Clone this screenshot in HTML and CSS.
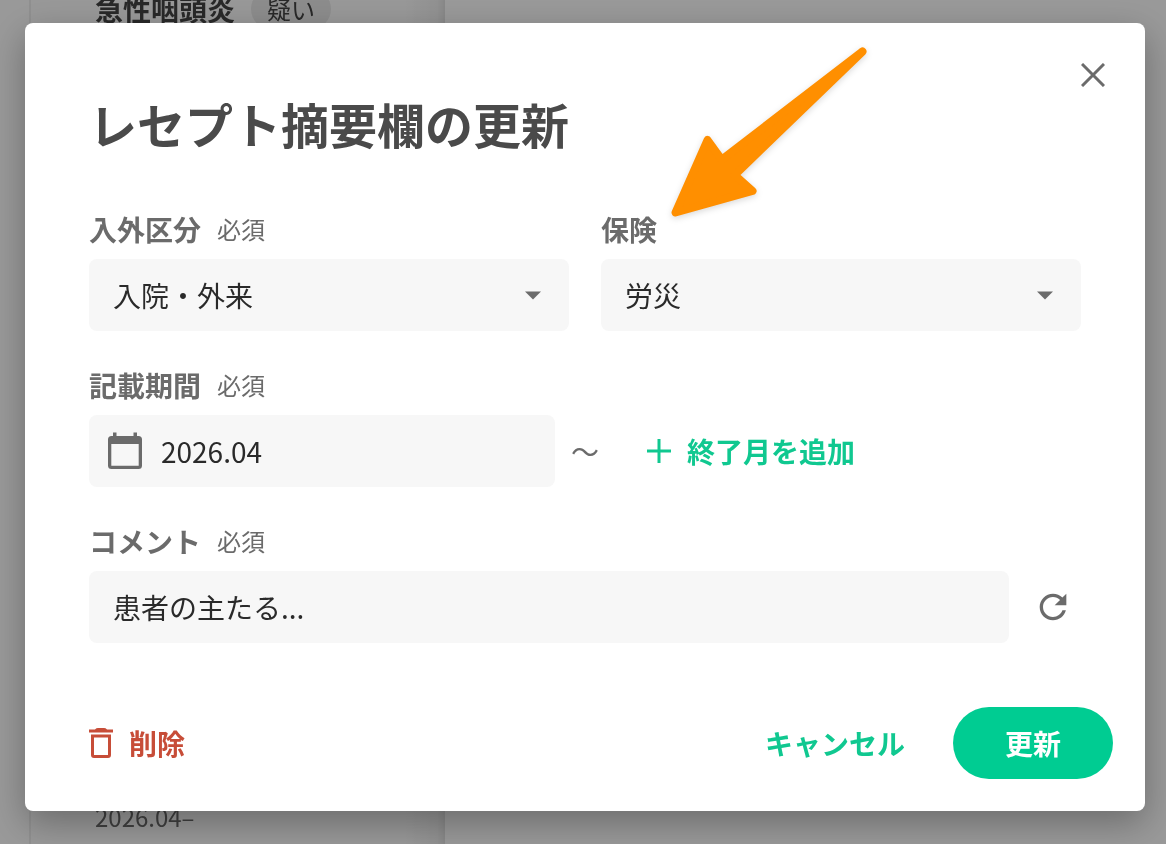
FILE: index.html
```html
<!DOCTYPE html>
<html lang="ja">
<head>
<meta charset="utf-8">
<meta name="viewport" content="width=device-width, initial-scale=1">
<title>レセプト摘要欄の更新</title>
<link rel="stylesheet" href="styles.css">
</head>
<body>
<div class="page" aria-hidden="true">
  <section class="panel">
    <div class="disease">
      <span class="disease-name">急性咽頭炎</span>
      <span class="tag">疑い</span>
    </div>
    <div class="period">2026.04–</div>
  </section>
</div>

<div class="overlay">
  <form class="modal" role="dialog" aria-modal="true" aria-labelledby="modal-title">
    <button class="close" type="button" aria-label="閉じる">
      <svg width="24" height="24" viewBox="0 0 24 24" fill="none" stroke="currentColor" stroke-width="3"><path d="M1 1L23 23M23 1L1 23"/></svg>
    </button>
    <h1 class="title" id="modal-title">レセプト摘要欄の更新</h1>

    <div class="fields">
      <div class="columns">
        <div class="field">
          <div class="caption"><label for="kubun">入外区分</label><span class="required">必須</span></div>
          <div class="control">
            <select class="input" id="kubun"><option>入院・外来</option></select>
            <svg class="caret" width="16" height="10" viewBox="0 0 16 10"><path d="M0 1.500H16L8 9.500Z" fill="currentColor"/></svg>
          </div>
        </div>
        <div class="field">
          <div class="caption"><label for="hoken">保険</label></div>
          <div class="control">
            <select class="input" id="hoken"><option>労災</option></select>
            <svg class="caret" width="16" height="10" viewBox="0 0 16 10"><path d="M0 1.500H16L8 9.500Z" fill="currentColor"/></svg>
          </div>
        </div>
      </div>

      <div class="field">
        <div class="caption"><label for="month">記載期間</label><span class="required">必須</span></div>
        <div class="row">
          <div class="control month">
            <svg class="calendar" width="36" height="40" viewBox="0 0 36 40"><path fill="currentColor" fill-rule="evenodd" d="M6 1.500h3.500v3.500h17V1.500H30v3.500h1.500A3.500 3.500 0 0 1 35 8.500v26a3.500 3.500 0 0 1-3.500 3.500h-27A3.500 3.500 0 0 1 1 34.500v-26A3.500 3.500 0 0 1 4.500 5H6zM4.300 13v21.700h27.400V13z"/></svg>
            <input class="input" id="month" type="text" value="2026.04">
          </div>
          <span class="tilde">～</span>
          <button class="link-button add" type="button">
            <svg width="24" height="24" viewBox="0 0 24 24" fill="none" stroke="currentColor" stroke-width="3"><path d="M12 0V24M0 12H24"/></svg>
            終了月を追加
          </button>
        </div>
      </div>

      <div class="field">
        <div class="caption"><label for="comment">コメント</label><span class="required">必須</span></div>
        <div class="row">
          <div class="control comment"><input class="input" id="comment" type="text" value="患者の主たる..."></div>
          <button class="refresh" type="button" aria-label="再読み込み">
            <svg width="40" height="40" viewBox="0 0 24 24" fill="currentColor"><path d="M17.650 6.350C16.200 4.900 14.210 4 12 4c-4.420 0-7.990 3.580-7.990 8s3.570 8 7.990 8c3.730 0 6.840-2.550 7.730-6h-2.080c-.820 2.330-3.040 4-5.650 4-3.310 0-6-2.690-6-6s2.690-6 6-6c1.660 0 3.140.690 4.220 1.780L13 11h7V4l-2.350 2.350z"/></svg>
          </button>
        </div>
      </div>
    </div>

    <footer class="actions">
      <button class="link-button delete" type="button">
        <svg width="24" height="32" viewBox="0 0 24 32" fill="none" stroke="currentColor" stroke-width="3"><path d="M0 4H24M7 3.500Q8 2.500 9 2.500H15Q16 2.500 17 3.500"/><path d="M3.500 9H20.500V28Q20.500 29.500 19 29.500H5Q3.500 29.500 3.500 28Z"/></svg>
        削除
      </button>
      <button class="link-button cancel" type="button">キャンセル</button>
      <button class="submit" type="submit">更新</button>
    </footer>

    <svg class="pointer" width="210" height="190" viewBox="0 0 210 190" aria-hidden="true"><path d="M15.500 182.500L47.500 110L61.700 129.600L202.500 21.500L74.600 145.100L92.500 161Z" fill="#ff8f00" stroke="#ff8f00" stroke-width="8" stroke-linejoin="round"/></svg>
  </form>
</div>
</body>
</html>
```
FILE: styles.css
```css
* {
  box-sizing: border-box;
}

body {
  margin: 0;
  min-height: 100vh;
  overflow: hidden;
  background: #fff;
  color: #2a2a2a;
  font-family: "Noto Sans CJK JP", sans-serif;
  font-size: 28px;
  line-height: 40px;
}

button,
input,
select {
  margin: 0;
  padding: 0;
  border: 0;
  background: none;
  color: inherit;
  font: inherit;
}

button {
  cursor: pointer;
}

svg {
  display: block;
  flex: none;
}

/* Page under the dialog */
.page {
  position: fixed;
  inset: 0;
  padding-left: 29px;
}

.panel {
  display: flex;
  flex-direction: column;
  justify-content: space-between;
  width: 416px;
  height: 100%;
  padding: 0 64px 7px;
  border-left: 2px solid #f0f0f0;
  background: linear-gradient(to left, #e4e4e4, #f4f4f4 8px, #fff 40px);
}

.disease {
  display: flex;
  align-items: center;
  gap: 16px;
  margin-top: -11px;
}

.disease-name {
  color: #454545;
  font-weight: 700;
}

.tag {
  padding: 0 16px;
  border-radius: 20px;
  background: #ebebeb;
  color: #454545;
  font-size: 24px;
}

.period {
  color: #6b6b6b;
  font-size: 24px;
}

/* Dialog */
.overlay {
  position: fixed;
  inset: 0;
  display: flex;
  align-items: center;
  justify-content: center;
  padding: 23px 21px 33px 25px;
  background: rgba(0, 0, 0, 0.4);
}

.modal {
  position: relative;
  width: 100%;
  max-width: 1120px;
  padding: 64px 32px 32px 64px;
  border-radius: 8px;
  background: #fff;
  box-shadow: 0 12px 36px rgba(0, 0, 0, 0.3);
}

.close {
  position: absolute;
  top: 24px;
  right: 24px;
  display: grid;
  place-items: center;
  width: 56px;
  height: 56px;
  color: #6b6b6b;
}

.title {
  margin: 0 0 50px;
  color: #4a4a4a;
  font-size: 48px;
  font-weight: 700;
  line-height: 72px;
}

.fields {
  display: flex;
  flex-direction: column;
  gap: 34px;
  margin-right: 32px;
}

.columns {
  display: grid;
  grid-template-columns: 1fr 1fr;
  gap: 32px;
}

.field {
  display: flex;
  flex-direction: column;
  gap: 10px;
}

.caption {
  display: flex;
  align-items: center;
  gap: 16px;
  color: #6b6b6b;
  font-weight: 700;
}

.required {
  font-size: 24px;
  font-weight: 400;
}

.row {
  display: flex;
  align-items: center;
  gap: 16px;
}

.control {
  display: flex;
  align-items: center;
  position: relative;
  height: 72px;
  border-radius: 8px;
  background: #f7f7f7;
}

.input {
  flex: 1;
  min-width: 0;
  height: 100%;
  padding: 0 24px;
  border-radius: 8px;
  appearance: none;
}

.caret {
  position: absolute;
  right: 28px;
  color: #6b6b6b;
  pointer-events: none;
}

.month {
  flex: 0 1 466px;
  gap: 18px;
  padding-left: 18px;
}

.month .input {
  padding-left: 0;
}

.calendar,
.tilde,
.refresh {
  color: #6b6b6b;
}

.comment {
  flex: 1;
}

.refresh {
  display: grid;
  place-items: center;
  width: 56px;
  height: 56px;
}

.link-button {
  display: flex;
  align-items: center;
  gap: 16px;
  height: 72px;
  color: #10c890;
  font-weight: 700;
}

.add {
  padding: 0 32px;
}

/* Footer */
.actions {
  display: flex;
  align-items: center;
  margin-top: 64px;
}

.delete {
  margin-right: auto;
  color: #c74d38;
}

.cancel {
  padding: 0 48px;
}

.submit {
  width: 160px;
  height: 72px;
  border-radius: 36px;
  background: #00cc92;
  color: #fff;
  font-weight: 700;
}

/* Callout arrow over the form */
.pointer {
  position: absolute;
  top: 7px;
  left: 635px;
  filter: drop-shadow(0 2px 3px rgba(0, 0, 0, 0.15));
  pointer-events: none;
}
```
